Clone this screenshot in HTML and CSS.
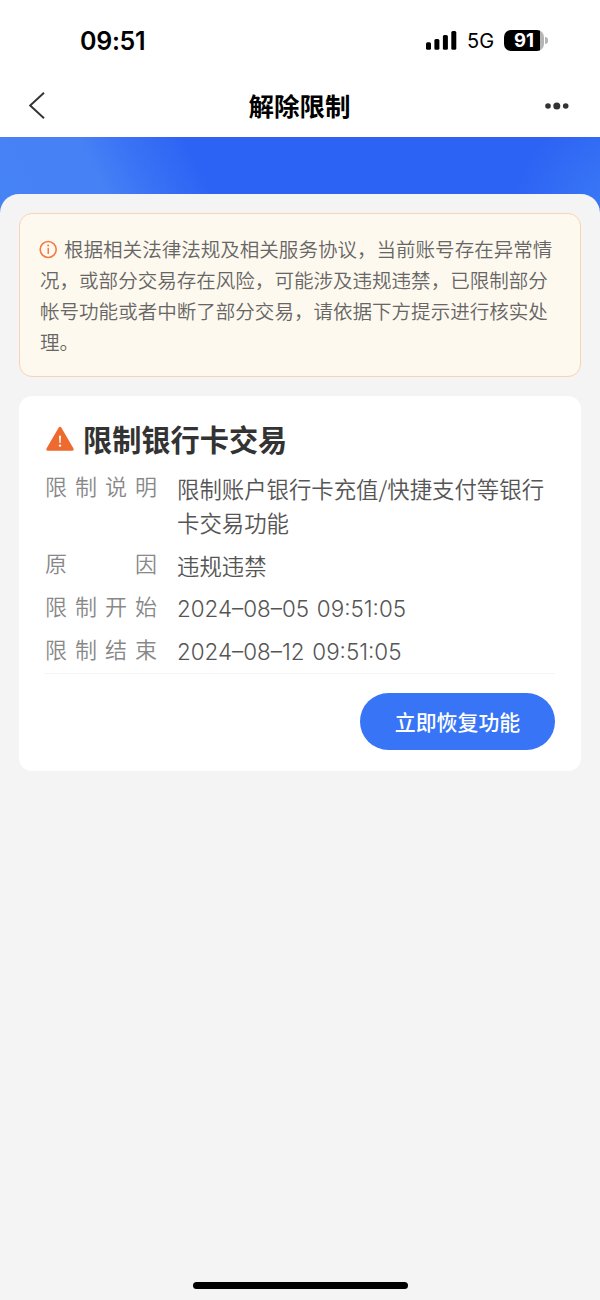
FILE: index.html
```html
<!doctype html>
<html lang="zh-CN">
<head>
  <meta charset="UTF-8">
  <meta name="viewport" content="width=device-width, initial-scale=1.0">
  <title>解除限制</title>
  <link rel="stylesheet" href="styles.css">
</head>
<body>
  <div class="status-bar">
    <div class="time">09:51</div>
    <div class="status-right">
      <svg class="signal" width="31" height="20" viewBox="0 0 31 20">
        <rect x="0" y="12.2" width="5" height="7.5" rx="1.5"/>
        <rect x="8.4" y="9" width="5" height="10.7" rx="1.5"/>
        <rect x="16.9" y="5" width="5" height="14.7" rx="1.5"/>
        <rect x="25.3" y="1" width="5" height="18.7" rx="1.5"/>
      </svg>
      <div class="network">5G</div>
      <div class="battery">91</div>
    </div>
  </div>

  <div class="nav-bar">
    <svg class="back" width="16" height="27" viewBox="0 0 16 27">
      <path d="M15 0.8 L1.2 13.5 L15 26.2" fill="none" stroke="#333" stroke-width="1.9"/>
    </svg>
    <h1 class="nav-title">解除限制</h1>
    <svg class="more" width="24" height="8" viewBox="0 0 24 8">
      <circle cx="3" cy="4" r="2.8"/>
      <circle cx="11.8" cy="4" r="3.5"/>
      <circle cx="20.7" cy="4" r="2.8"/>
    </svg>
  </div>

  <div class="banner"></div>

  <div class="content">
    <div class="notice">
      <svg class="info-icon" width="19" height="19" viewBox="0 0 19 19">
        <circle cx="9.2" cy="9.5" r="8" fill="none" stroke="#f47b45" stroke-width="1.6"/>
        <circle cx="9.2" cy="5.6" r="1" fill="#f47b45"/>
        <rect x="8.5" y="7.8" width="1.5" height="6.2" fill="#f47b45"/>
      </svg>根据相关法律法规及相关服务协议，当前账号存在异常情况，或部分交易存在风险，可能涉及违规违禁，已限制部分帐号功能或者中断了部分交易，请依据下方提示进行核实处理。
    </div>

    <div class="card">
      <div class="card-title">
        <svg width="28" height="26" viewBox="0 0 28 26">
          <path d="M14 2.2 L26.2 23.2 H1.8 Z" fill="#ed6b2f" stroke="#ed6b2f" stroke-width="3" stroke-linejoin="round"/>
          <path d="M13 9.8 H15 L14.6 17 H13.4 Z" fill="#fff"/>
          <circle cx="14" cy="19.6" r="1.2" fill="#fff"/>
        </svg>
        <h2>限制银行卡交易</h2>
      </div>
      <div class="row">
        <div class="label">限制说明</div>
        <div class="value">限制账户银行卡充值/快捷支付等银行卡交易功能</div>
      </div>
      <div class="row">
        <div class="label">原因</div>
        <div class="value">违规违禁</div>
      </div>
      <div class="row">
        <div class="label">限制开始</div>
        <div class="value date">2024–08–05 09:51:05</div>
      </div>
      <div class="row">
        <div class="label">限制结束</div>
        <div class="value date">2024–08–12 09:51:05</div>
      </div>
      <div class="card-footer">
        <button class="restore-button">立即恢复功能</button>
      </div>
    </div>
  </div>

  <div class="home-indicator"></div>
</body>
</html>
```

FILE: styles.css
```css
* {
  box-sizing: border-box;
}

body {
  margin: 0;
  height: 1300px;
  display: flex;
  flex-direction: column;
  background: #f4f4f4;
  font-family: 'Noto Sans CJK SC', sans-serif;
  overflow: hidden;
}

.status-bar {
  height: 75px;
  padding: 7px 56px 0 80px;
  display: flex;
  justify-content: space-between;
  align-items: center;
  background: #fff;
  font-family: Inter, sans-serif;
  color: #000;
}

.time {
  font-size: 25px;
  font-weight: 600;
  letter-spacing: -0.3px;
}

.status-right {
  display: flex;
  align-items: center;
  margin-top: -2px;
}

.signal {
  margin-right: 10px;
}

.network {
  width: 37px;
  padding-top: 2px;
  font-size: 20px;
}

.battery {
  position: relative;
  width: 40px;
  height: 21px;
  border-radius: 7px;
  background: linear-gradient(to right, #000 36px, #b5b5b5 36px);
  color: #fff;
  font-size: 18.5px;
  font-weight: 700;
  line-height: 21px;
  text-align: center;
}

.battery::after {
  content: "";
  position: absolute;
  right: -4px;
  top: 7px;
  width: 3px;
  height: 7px;
  border-radius: 0 3px 3px 0;
  background: #b5b5b5;
}

.nav-bar {
  height: 62px;
  padding: 0 31px 1px 29px;
  display: flex;
  justify-content: space-between;
  align-items: center;
  background: #fff;
}

.nav-title {
  margin: -1px 0 0;
  padding-left: 9px;
  font-size: 25.5px;
  line-height: 36px;
  font-weight: 700;
}

.more {
  fill: #333;
}

.banner {
  height: 79px;
  flex-shrink: 0;
  background:
    radial-gradient(circle at 640px 90px, #3f82f6 0, rgba(63, 130, 246, 0) 130px),
    linear-gradient(63deg, #4683f5 0, #4681f5 105px, #3a73f5 145px, #2d63f4 200px);
}

.content {
  flex: 1;
  margin-top: -22px;
  padding: 19px 19px 0;
  border-radius: 19px 19px 0 0;
  background: #f4f4f4;
}

.notice {
  height: 164px;
  margin-bottom: 19px;
  padding: 19px 19px 19px 20px;
  border: 1px solid #fbd2b5;
  border-radius: 13px;
  background: #fef9ee;
  color: #666;
  font-size: 19.55px;
  font-weight: 350;
  line-height: 31px;
}

.info-icon {
  margin: 0 6px 0 -1px;
  vertical-align: -2px;
}

.card {
  height: 375px;
  padding: 21px 26px 0;
  border-radius: 13px;
  background: #fff;
}

.card-title {
  display: flex;
  align-items: center;
  gap: 9px;
  height: 42px;
  margin: 0 0 13px 1px;
}

.card-title svg {
  margin-top: 2px;
}

.card-title h2 {
  margin: 0;
  color: #333;
  font-size: 29.2px;
  font-weight: 700;
}

.row {
  display: flex;
  gap: 20px;
  margin-bottom: 9.5px;
  line-height: 33.5px;
}

.label {
  width: 112px;
  margin-top: -3px;
  color: #888;
  font-size: 22px;
  font-weight: 350;
  text-align-last: justify;
}

.value {
  flex: 1;
  color: #555;
  font-size: 22.4px;
  font-weight: 350;
}

.date {
  font-family: Inter, sans-serif;
  font-size: 22.4px;
  word-spacing: 1.5px;
}

.card-footer {
  display: flex;
  justify-content: flex-end;
  margin: -5px 0 0 -1px;
  padding-top: 19px;
  border-top: 1px solid #f5f5f5;
}

.restore-button {
  width: 195px;
  height: 57px;
  padding: 0 0 1px;
  border: none;
  border-radius: 29px;
  background: #3875f6;
  color: #fff;
  font-family: inherit;
  font-size: 20.9px;
  font-weight: 500;
}

.home-indicator {
  width: 215px;
  height: 7px;
  margin: 0 auto 11px;
  border-radius: 4px;
  background: #000;
}
```
